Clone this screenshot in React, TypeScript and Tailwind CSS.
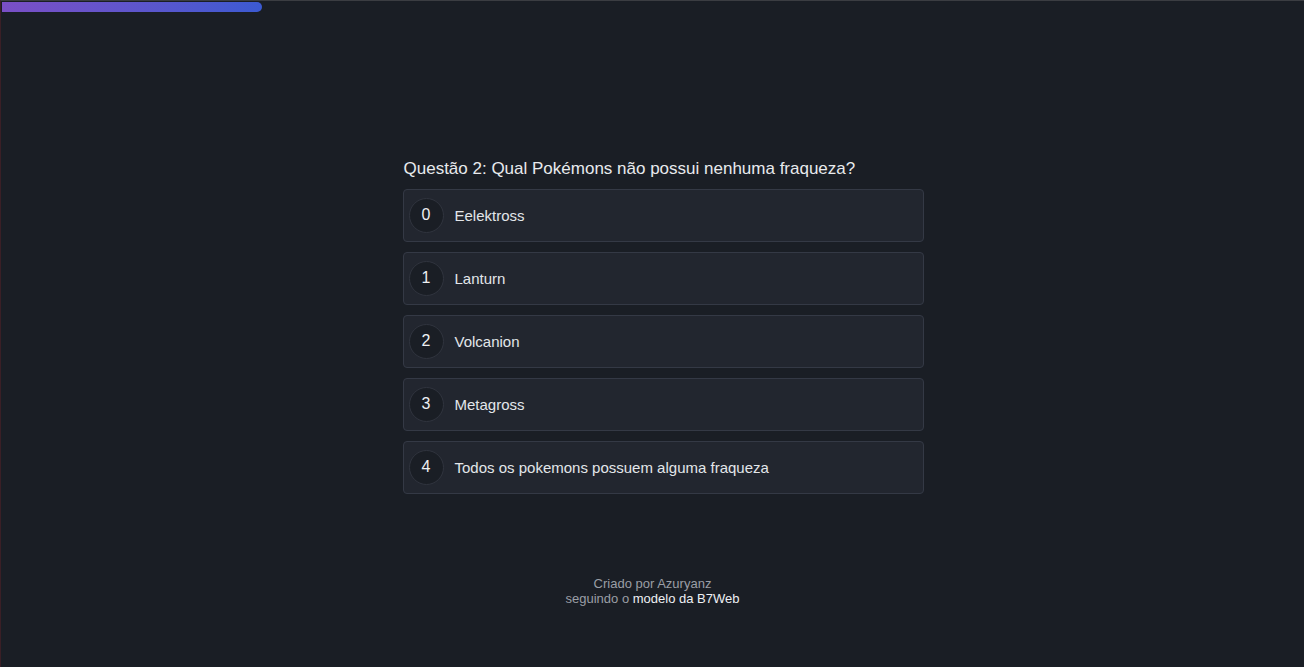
const options = [
  "Eelektross",
  "Lanturn",
  "Volcanion",
  "Metagross",
  "Todos os pokemons possuem alguma fraqueza",
];

export default function App() {
  return (
    <div className="flex h-[667px] w-[1304px] flex-col border-l border-t border-l-[#3a1f26] border-t-[#3b3d42] bg-[#1a1e25] font-['Liberation_Sans',Arial,sans-serif] text-[#e6e8eb]">
      <div className="pl-px pt-px">
        <div className="h-[10px] w-[260px] rounded-r-full bg-gradient-to-r from-[#7a4fc6] to-[#3b5ad2]" />
      </div>

      <main className="mx-auto mt-[147px] w-[542px] pl-[21px]">
        <h1 className="pl-px text-[17px] leading-[20px] text-[#e8eaed]">
          Questão 2: Qual Pokémons não possui nenhuma fraqueza?
        </h1>
        <ul className="mt-[10px] flex flex-col gap-[10px]">
          {options.map((opt, i) => (
            <li
              key={i}
              className="flex h-[53px] cursor-pointer items-center gap-[11px] rounded-[4px] border border-[#343945] bg-[#22262f] px-[5px]"
            >
              <span className="flex h-[35px] w-[35px] items-center justify-center rounded-full border border-[#30343e] bg-[#1a1e25] pb-[1px] text-[16px] text-[#eef0f3]">
                {i}
              </span>
              <span className="pt-px text-[15px] text-[#e3e6ea]">{opt}</span>
            </li>
          ))}
        </ul>
      </main>

      <footer className="mt-[82px] text-center text-[13px] leading-[15px] text-[#9a9ea6]">
        <p>Criado por Azuryanz</p>
        <p>
          seguindo o <a className="text-[#eef0f3]">modelo da B7Web</a>
        </p>
      </footer>
    </div>
  );
}
